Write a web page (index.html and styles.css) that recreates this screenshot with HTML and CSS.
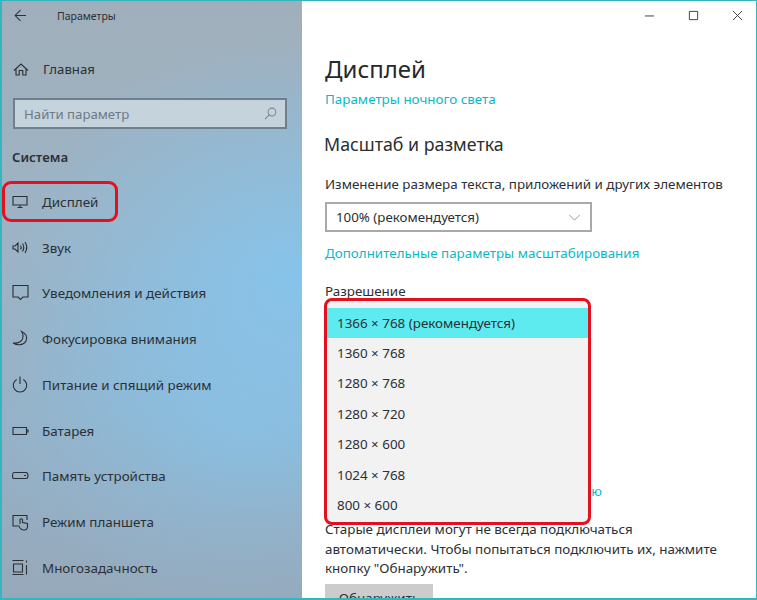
FILE: index.html
```html
<!DOCTYPE html>
<html>

<head>
  <title>Параметры</title>
  <meta content='width=device-width, initial-scale=1' name='viewport' />
  <link rel="stylesheet" href="styles.css">
</head>

<body>
  <div class="window">
    <!-- Left navigation -->
    <aside class="sidebar">
      <div class="titlebar">
        <svg class="back-icon" viewBox="0 0 14 14" fill="none" stroke="currentColor" stroke-width="1.1">
          <path d="M13 7H1.5M7 1.2L1.2 7L7 12.8"></path>
        </svg>
        <span class="app-name">Параметры</span>
      </div>

      <a class="nav-item nav-home">
        <svg class="nav-icon" viewBox="0 0 18 18" fill="none" stroke="currentColor" stroke-width="1.1">
          <path d="M1 10.5L8 4L15 10.5M3 9V15H6.2V10.5H9.8V15H13V9"></path>
        </svg>
        <span>Главная</span>
      </a>

      <div class="search">
        <span>Найти параметр</span>
        <svg class="search-icon" viewBox="0 0 14 14" fill="none" stroke="currentColor" stroke-width="1.1">
          <circle cx="8.6" cy="5.4" r="4.2"></circle>
          <path d="M5.6 8.4L1 13"></path>
        </svg>
      </div>

      <div class="nav-group">Система</div>

      <a class="nav-item nav-active">
        <svg class="nav-icon" viewBox="0 0 18 18" fill="none" stroke="currentColor" stroke-width="1.1">
          <path d="M1 3.5H15V12H1ZM8 12V14.5M5.5 14.5H10.5"></path>
        </svg>
        <span>Дисплей</span>
      </a>
      <a class="nav-item">
        <svg class="nav-icon" viewBox="0 0 18 18" fill="none" stroke="currentColor" stroke-width="1.1">
          <path d="M1 7H3L6 4V13L3 10H1ZM8.5 6.5Q10 8.5 8.5 10.5M10.5 4.5Q13 8.5 10.5 12.5M13 3Q16.5 8.5 13 14"></path>
        </svg>
        <span>Звук</span>
      </a>
      <a class="nav-item">
        <svg class="nav-icon" viewBox="0 0 18 18" fill="none" stroke="currentColor" stroke-width="1.1">
          <path d="M1 1.5H16V13H11L8.5 15.5L6 13H1Z"></path>
        </svg>
        <span>Уведомления и действия</span>
      </a>
      <a class="nav-item">
        <svg class="nav-icon" viewBox="0 0 18 18" fill="none" stroke="currentColor" stroke-width="1.1">
          <path d="M9.5 1.5C13.5 3 16 7 14 11C12 15 6 16 1 13C6 13.5 9 12 10.5 9C11.5 6 11 3.5 9.5 1.5Z"></path>
        </svg>
        <span>Фокусировка внимания</span>
      </a>
      <a class="nav-item">
        <svg class="nav-icon" viewBox="0 0 18 18" fill="none" stroke="currentColor" stroke-width="1.1">
          <path d="M4.7 3.5A6.7 6.7 0 1 0 11.3 3.5M8 0.5V8"></path>
        </svg>
        <span>Питание и спящий режим</span>
      </a>
      <a class="nav-item">
        <svg class="nav-icon" viewBox="0 0 18 18" fill="none" stroke="currentColor" stroke-width="1.1">
          <path d="M1 5.5H14.5V12.5H1ZM14.5 8H16V10H14.5"></path>
        </svg>
        <span>Батарея</span>
      </a>
      <a class="nav-item">
        <svg class="nav-icon" viewBox="0 0 18 18" fill="none" stroke="currentColor" stroke-width="1.1">
          <path d="M2 5.5H14Q16 5.5 16 9Q16 11.5 14 11.5H2Q0.5 11.5 0.5 9Q0.5 5.5 2 5.5ZM12 8.5H14"></path>
        </svg>
        <span>Память устройства</span>
      </a>
      <a class="nav-item">
        <svg class="nav-icon" viewBox="0 0 18 18" fill="none" stroke="currentColor" stroke-width="1.1">
          <path d="M6 13H1V2.5H15V7M8 11V6.5Q9.5 5 10.5 6.5V9.5L15.5 10.5V14Q15 17.5 11.5 17Q9.5 17 8 15L6.5 12.5"></path>
        </svg>
        <span>Режим планшета</span>
      </a>
      <a class="nav-item">
        <svg class="nav-icon" viewBox="0 0 18 18" fill="none" stroke="currentColor" stroke-width="1.1">
          <path d="M0.5 1.5H11.5M0.5 15.5H11.5M1.5 5H10.5V13H1.5ZM14.5 1.5V3.5M14.5 6V15.5"></path>
        </svg>
        <span>Многозадачность</span>
      </a>
    </aside>

    <!-- Settings page -->
    <main class="content">
      <div class="window-controls">
        <svg class="control" viewBox="0 0 12 12" fill="none" stroke="currentColor"><path d="M1 6.5H11"></path></svg>
        <svg class="control" viewBox="0 0 12 12" fill="none" stroke="currentColor"><path d="M1.5 1.5H10.5V10.5H1.5Z"></path></svg>
        <svg class="control" viewBox="0 0 12 12" fill="none" stroke="currentColor"><path d="M1 1L11 11M11 1L1 11"></path></svg>
      </div>

      <h1 class="page-title">Дисплей</h1>
      <a class="link link-night">Параметры ночного света</a>

      <h2 class="section-title">Масштаб и разметка</h2>
      <p class="label">Изменение размера текста, приложений и других элементов</p>
      <div class="combo">
        <span>100% (рекомендуется)</span>
        <svg class="combo-arrow" viewBox="0 0 14 8" fill="none" stroke="currentColor"><path d="M1 1L7 7L13 1"></path></svg>
      </div>
      <a class="link link-scale">Дополнительные параметры масштабирования</a>

      <p class="label label-res">Разрешение</p>
      <div class="res-slot">
        <ul class="res-list">
          <li class="res-selected">1366 × 768 (рекомендуется)</li>
          <li>1360 × 768</li>
          <li>1280 × 768</li>
          <li>1280 × 720</li>
          <li>1280 × 600</li>
          <li>1024 × 768</li>
          <li>800 × 600</li>
        </ul>
      </div>

      <a class="link link-wireless">Подключиться к беспроводному дисплею</a>
      <p class="hint">Старые дисплеи могут не всегда подключаться автоматически. Чтобы попытаться подключить их, нажмите кнопку "Обнаружить".</p>
      <div class="detect-btn">Обнаружить</div>
    </main>
  </div>
</body>

</html>
```

FILE: styles.css
```css
*,
*::after {
  box-sizing: border-box;
}

html,
body {
  margin: 0;
  padding: 0;
  height: 600px;
  overflow: hidden;
}

body {
  font-family: "Noto Sans", "Open Sans", sans-serif;
  color: #2b3036;
  background-color: #ffffff;
}

.window {
  display: flex;
  width: 757px;
  height: 600px;
  border: solid #35b6bf;
  border-width: 1px 1px 2px 1px;
  overflow: hidden;
}

/* Sidebar */

.sidebar {
  flex: 0 0 301px;
  height: 100%;
  padding-top: 1px;
  box-shadow: inset 1px 0 0 #35b6bf;
  background:
    radial-gradient(ellipse 300px 240px at 100% 46%, rgba(133, 196, 236, 0.95), rgba(133, 196, 236, 0) 100%),
    radial-gradient(ellipse 260px 200px at 80% 70%, rgba(133, 196, 236, 0.6), rgba(133, 196, 236, 0) 100%),
    linear-gradient(180deg, #a0afbb 0%, #9db3c4 40%, #96b1c6 70%, #96a9ba 100%);
}

.titlebar {
  display: flex;
  align-items: center;
  height: 28px;
  padding-left: 13px;
}

.back-icon {
  width: 13px;
  height: 13px;
  margin-top: -1px;
}

.app-name {
  margin-left: 30px;
  font-size: 10.5px;
}

.nav-item {
  position: relative;
  display: flex;
  align-items: center;
  height: 45.75px;
  padding-left: 11px;
  font-size: 13.4px;
}

.nav-icon {
  flex: none;
  width: 18px;
  height: 18px;
  margin-right: 12px;
}

.nav-home {
  margin-top: 17px;
  height: 44px;
  padding-left: 12px;
  font-size: 13.2px;
}

.nav-active::after {
  content: "";
  position: absolute;
  left: 1px;
  top: 2px;
  width: 116px;
  height: 41px;
  border: 3px solid #e3101f;
  border-radius: 9px;
}

.search {
  display: flex;
  align-items: center;
  justify-content: space-between;
  height: 31px;
  margin: 7px 15px 0 12px;
  padding: 0 8px 0 9px;
  border: 2px solid #6f7f8c;
  background-color: #c5d3dd;
  color: #6d7985;
  font-size: 13.2px;
}

.search-icon {
  width: 13px;
  height: 13px;
  color: #7b8793;
}

.nav-group {
  height: 20px;
  margin: 18px 0 12px 11px;
  line-height: 20px;
  font-size: 13.2px;
  font-weight: 600;
}

/* Content */

.content {
  flex: 1;
  min-width: 0;
  height: 100%;
  padding: 0 0 0 23px;
  background-color: #ffffff;
}

.window-controls {
  display: flex;
  justify-content: flex-end;
  gap: 33px;
  height: 31px;
  padding: 9px 13px 0 0;
  color: #33373b;
}

.control {
  width: 11px;
  height: 11px;
}

.page-title {
  margin: 19px 0 0;
  font-size: 24px;
  font-weight: 400;
  line-height: 36px;
  color: #26292c;
}

.link {
  display: block;
  color: #0bb8c8;
  font-size: 13.4px;
  line-height: 20px;
  white-space: nowrap;
}

.link-night {
  margin-top: 2px;
}

.section-title {
  margin: 23px 0 0 -1px;
  font-size: 17.8px;
  font-weight: 400;
  line-height: 24px;
  color: #2b2f33;
}

.label {
  margin: 18px 0 0;
  font-size: 13.4px;
  line-height: 20px;
  white-space: nowrap;
}

.combo {
  display: flex;
  align-items: center;
  justify-content: space-between;
  width: 267px;
  height: 30px;
  margin-top: 8px;
  padding: 0 9px 0 9px;
  border: 2px solid #a9a9a9;
  font-size: 13.3px;
}

.combo-arrow {
  width: 13px;
  height: 7px;
  color: #8d8d8d;
}

.link-scale {
  margin-top: 11px;
}

.label-res {
  margin-top: 18px;
}

.res-slot {
  position: relative;
  height: 180px;
}

.res-list {
  position: absolute;
  left: -1px;
  top: -3px;
  width: 267px;
  height: 227px;
  margin: 0;
  padding: 7px 0 0;
  list-style: none;
  background-color: #f2f2f2;
  border: 3px solid #e3101f;
  border-radius: 8px;
  font-size: 13.4px;
}

.res-list li {
  height: 30.5px;
  line-height: 30.5px;
  padding-left: 10px;
}

.res-list .res-selected {
  height: 29.5px;
  line-height: 30px;
  background-color: #5eebf0;
}

.link-wireless {
  width: 277px;
  text-align: right;
}

.hint {
  width: 400px;
  margin: 19px 0 0;
  font-size: 13.4px;
  line-height: 19.5px;
}

.detect-btn {
  width: 108px;
  height: 32px;
  margin-top: 5px;
  background-color: #cccccc;
  text-align: center;
  font-size: 13.4px;
  line-height: 28px;
}
```
